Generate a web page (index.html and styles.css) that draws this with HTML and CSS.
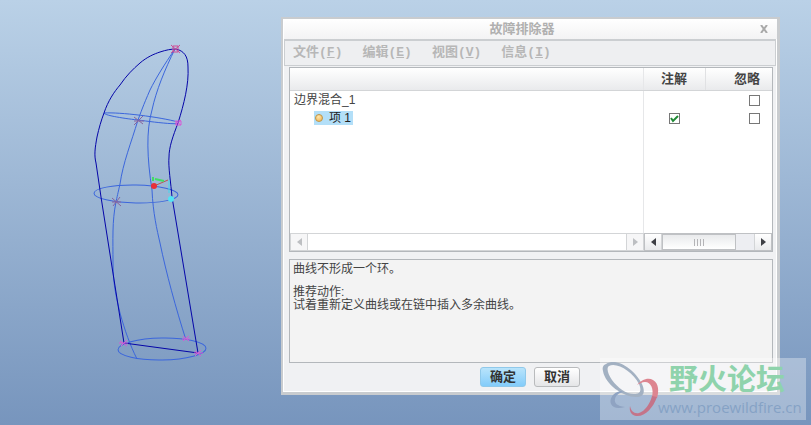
FILE: index.html
```
<!DOCTYPE html>
<html lang="zh-CN">
<head>
  <meta charset="UTF-8">
  <meta name="viewport" content="width=device-width, initial-scale=1.0">
  <title>故障排除器</title>
  <link rel="stylesheet" href="styles.css">
</head>
<body>

  <main class="workspace">

    <svg class="model" width="220" height="425" viewBox="0 0 220 425" fill="none">
      <!-- section curves -->
      <g stroke="#3b66dc">
        <path d="M175 49C164 65 156 78 150 90C143 106 141 112 138 120C131 143 123 163 120 184C118 193 117 197 116 202C112 221 113 240 113 263C113 286 117 300 120 313C125 331 130 345 137 359"/>
        <path d="M175 49C165 69 156 91 152 110C146 131 147 158 152 190C153 213 157 230 160 243C166 272 176 309 186 340"/>
        <path d="M104 113C120 112 160 117 178 122C184 126 153 122 138 120C120 118 104 115 104 113Z"/>
        <ellipse cx="136" cy="194" rx="42" ry="9" transform="rotate(1 136 194)"/>
        <ellipse cx="162" cy="349" rx="44" ry="11" transform="rotate(-1 162 349)"/>
      </g>
      <!-- boundary -->
      <path stroke="#0505a8" d="M124 343L101 197L96 163C94 155 95 148 97 137C99 128 101 121 104 113C108 101 114 92 120 85C126 76 133 69 140 63C147 57 154 54 160 52C166 50 171 49 176 49C184 51 188 56 188 67C189 84 184 104 178 123C173 136 169 147 169 157C168 166 171 184 172 197L198 353L124 343"/>
      <!-- vertices -->
      <g stroke="#d65ad6">
        <path stroke="#d04a94" d="M171 45L180 53M180 45L171 53M173 46H178V52H173Z"/>
        <path d="M175 121L181 125M181 120L175 125M176 121H181V125H176Z"/>
        <path d="M120 341L127 346M127 340L121 346M119 343H128"/>
        <path d="M183 336L189 341M189 336L183 341M182 339H190"/>
        <path d="M195 351L201 356M201 350L195 356M194 353H203"/>
      </g>
      <path stroke="#88649d" d="M134 117L143 124M143 116L134 125M134 121H144M112 198L121 206M120 197L113 206M112 202H121"/>
      <!-- coordinate system -->
      <path stroke="#43d8ef" d="M169 180V193"/>
      <path stroke="#b95555" d="M154 186L168 180"/>
      <path stroke="#42dc65" d="M153 177V181M155 179L164 181" stroke-width="2"/>
      <circle cx="154" cy="186" r="3" fill="#e82f37"/>
      <circle cx="171" cy="199" r="3" fill="#52e4f5"/>
    </svg>

    <section class="dialog" role="dialog" aria-labelledby="dialog-title">
      <header class="titlebar">
        <h1 id="dialog-title" class="title">故障排除器</h1>
        <button class="close" type="button" aria-label="关闭">
          <svg width="8" height="8" viewBox="0 0 8 8"><path d="M1 0L7 8M7 0L1 8" stroke="#a9a9a9" stroke-width="2"/></svg>
        </button>
      </header>

      <nav class="menubar">
        <button type="button" class="menu">文件(<u>F</u>)</button>
        <button type="button" class="menu">编辑(<u>E</u>)</button>
        <button type="button" class="menu">视图(<u>V</u>)</button>
        <button type="button" class="menu">信息(<u>I</u>)</button>
      </nav>

      <div class="content">
        <div class="list">
          <div class="list-body">
            <table class="tree">
              <thead>
                <tr>
                  <th class="col-name"></th>
                  <th class="col-note">注解</th>
                  <th class="col-ignore">忽略</th>
                </tr>
              </thead>
              <tbody>
                <tr>
                  <td class="col-name">边界混合_1</td>
                  <td class="col-note"></td>
                  <td class="col-ignore"><input type="checkbox" class="check" aria-label="忽略 边界混合_1"></td>
                </tr>
                <tr>
                  <td class="col-name child"><span class="selected"><i class="bullet"></i>项 1</span></td>
                  <td class="col-note"><input type="checkbox" class="check" checked aria-label="注解 项 1"></td>
                  <td class="col-ignore"><input type="checkbox" class="check" aria-label="忽略 项 1"></td>
                </tr>
                <tr class="filler">
                  <td class="col-name"></td>
                  <td class="col-note"></td>
                  <td class="col-ignore"></td>
                </tr>
              </tbody>
            </table>
          </div>
          <div class="scrollbars">
            <div class="scrollbar disabled">
              <button type="button" class="arrow" aria-label="向左"><svg width="5" height="8" viewBox="0 0 5 8"><path d="M5 0V8L0 4Z"/></svg></button>
              <div class="track"></div>
              <button type="button" class="arrow" aria-label="向右"><svg width="5" height="8" viewBox="0 0 5 8"><path d="M0 0V8L5 4Z"/></svg></button>
            </div>
            <div class="scrollbar columns">
              <button type="button" class="arrow" aria-label="向左"><svg width="5" height="8" viewBox="0 0 5 8"><path d="M5 0V8L0 4Z"/></svg></button>
              <div class="track">
                <div class="thumb"><svg width="12" height="7" viewBox="0 0 12 7"><path d="M1.500 0V7M4.500 0V7M7.500 0V7M10.500 0V7" stroke="#b4b4b7"/></svg></div>
              </div>
              <button type="button" class="arrow" aria-label="向右"><svg width="5" height="8" viewBox="0 0 5 8"><path d="M0 0V8L5 4Z"/></svg></button>
            </div>
          </div>
        </div>

        <div class="message">
          <p>曲线不形成一个环。</p>
          <p class="advice">推荐动作:</p>
          <p>试着重新定义曲线或在链中插入多余曲线。</p>
        </div>
      </div>

      <footer class="actions">
        <button type="button" class="btn primary">确定</button>
        <button type="button" class="btn">取消</button>
      </footer>
    </section>

    <aside class="watermark">
      <svg class="logo" width="60" height="56" viewBox="0 0 60 56">
        <path fill="#a3b1c2" fill-rule="evenodd" d="M5 3C16-4 34 9 41 23C45 32 42 36 35 36C22 36 4 23 2 10C1 7 2 4 5 3ZM8 5C5 7 7 13 11 19C17 27 25 33 33 33C39 33 41 30 38 23C32 11 16 1 8 5Z"/>
        <path fill="#8fa3c2" d="M20 30C12 31 8 38 10 43C12 47 17 48 24 46C16 45 13 42 14 38C15 34 18 32 22 31Z"/>
        <path fill="#dd8590" d="M36 24C40 19 47 16 52 19C58 22 58 31 56 37L51 36C53 28 50 21 44 21C41 21 38 23 36 24Z"/>
        <path fill="#c47489" d="M56 36C52 47 44 56 35 55C30 54 28 50 29 45C30 50 33 53 38 52C44 50 49 43 51 35Z"/>
      </svg>
      <div class="brand">
        <strong class="brand-name">野火论坛</strong>
        <span class="brand-url">www.proewildfire.cn</span>
      </div>
    </aside>

  </main>

</body>
</html>
```
FILE: styles.css
```
* {
  box-sizing: border-box;
}

body {
  margin: 0;
  font-family: "Liberation Sans", "Noto Sans CJK SC", sans-serif;
  font-size: 12px;
  color: #444;
}

button {
  margin: 0;
  padding: 0;
  border: 0;
  background: none;
  font: inherit;
  color: inherit;
}

p {
  margin: 0;
}

.workspace {
  position: relative;
  min-height: 100vh;
  overflow: hidden;
  background: linear-gradient(#bad1e7, #7795bd);
}

.model {
  display: block;
}

/* Dialog window */
.dialog {
  position: absolute;
  top: 17px;
  left: 281px;
  right: 31px;
  border: 2px solid #c9cccf;
  border-right-width: 3px;
  border-bottom-width: 3px;
  background: #f0f1f3;
  box-shadow: inset 0 0 0 1px #fff;
}

.titlebar {
  display: flex;
  align-items: center;
  height: 20px;
  padding: 0 9px 0 0;
  margin-left: 1px;
  background: linear-gradient(#fff, #f3f3f4);
}

.title {
  flex: 1;
  margin: 0;
  font-size: 13px;
  line-height: 20px;
  text-align: center;
  color: #b0b0b0;
}

.close {
  display: flex;
}

.menubar {
  display: flex;
  gap: 20px;
  height: 27px;
  margin: 0 1px;
  padding: 0 8px;
  border: solid #cbced1;
  border-width: 2px 1px 1px;
  background: #eeeff1;
}

.menu {
  font-family: "Liberation Mono", "Noto Sans CJK SC", monospace;
  font-size: 13px;
  font-weight: bold;
  line-height: 22px;
  color: #b7b7b7;
}

.content {
  display: flex;
  flex-direction: column;
  gap: 7px;
  padding: 1px 4px 0 6px;
}

/* Item list */
.list {
  border: 1px solid #b3b7bb;
  background: #fff;
}

.list-body {
  height: 165px;
}

.tree {
  width: 100%;
  height: 100%;
  table-layout: fixed;
  border-collapse: collapse;
}

.tree tr {
  height: 18px;
}

.tree thead tr {
  height: 22px;
  background: linear-gradient(#fff, #e9eaec);
}

.tree .filler {
  height: auto;
}

.tree th {
  padding: 0;
  border-bottom: 1px solid #d3d5d7;
  font-size: 13px;
  line-height: 20px;
}

.tree td {
  padding: 0;
  line-height: 18px;
}

.tree .col-name {
  padding-left: 4px;
  border-right: 1px solid #e6e7e9;
}

.tree .child {
  padding-left: 24px;
}

.tree .col-note {
  width: 62px;
  text-align: center;
}

.tree th.col-note {
  border-right: 1px solid #e0e1e3;
}

.tree .col-ignore {
  width: 67px;
  padding-right: 12px;
  text-align: right;
}

.selected {
  display: inline-flex;
  align-items: center;
  gap: 6px;
  height: 14px;
  padding: 0 2px 0 1px;
  background: #b3dff8;
  color: #222;
  vertical-align: middle;
}

.bullet {
  width: 8px;
  height: 8px;
  border: 1px solid #bd964b;
  border-radius: 50%;
  background: radial-gradient(circle at 40% 30%, #ffe7ab, #f0ae4c);
}

.check {
  display: inline-block;
  appearance: none;
  width: 11px;
  height: 11px;
  margin: 0;
  border: 1px solid #777;
  background: #fff;
  vertical-align: middle;
}

.check:checked {
  background: #fff url("data:image/svg+xml,%3Csvg xmlns='http://www.w3.org/2000/svg' viewBox='0 0 9 9'%3E%3Cpath d='M1 4L3 7L8 2' fill='none' stroke='%231f8a35' stroke-width='2'/%3E%3C/svg%3E");
}

/* Scrollbars */
.scrollbars {
  display: flex;
  height: 18px;
}

.scrollbar {
  display: flex;
  flex: 1;
  border: 1px solid #d3d5d7;
  background: #fff;
}

.columns {
  flex: 0 0 128px;
  border-color: #bfc1c4;
  background: #edeef2;
}

.arrow {
  display: flex;
  align-items: center;
  justify-content: center;
  width: 16px;
  background: linear-gradient(#fff, #e9eaec);
  fill: #3e3f45;
}

.disabled .arrow {
  background: #f6f6f7;
  fill: #bdbfc2;
}

.track {
  display: flex;
  flex: 1;
  border: solid #d3d5d7;
  border-width: 0 1px;
}

.thumb {
  display: flex;
  align-items: center;
  justify-content: center;
  width: 80%;
  border: 1px solid #bfc1c4;
  background: linear-gradient(#e9eaec, #fff);
}

/* Message area */
.message {
  height: 104px;
  padding: 3px;
  border: 1px solid #b3b7bb;
  background: #f3f3f3;
  line-height: 13px;
}

.advice {
  margin-top: 10px;
}

.actions {
  display: flex;
  justify-content: center;
  gap: 8px;
  padding: 4px 0 5px;
}

.btn {
  width: 46px;
  height: 20px;
  border: 1px solid #b9bbbd;
  border-radius: 3px;
  background: linear-gradient(#fff, #e4e5e7);
  font-size: 13px;
  font-weight: bold;
  line-height: 18px;
  color: #333;
}

.primary {
  border-color: #90c9ea;
  background: linear-gradient(#b9e4fb, #83ccfa);
}

/* Forum watermark */
.watermark {
  position: absolute;
  right: 5px;
  bottom: 5px;
  display: flex;
  width: 206px;
  height: 62px;
  padding: 3px 0 0 1px;
  background: rgba(255, 255, 255, 0.33);
}

.brand {
  display: flex;
  flex-direction: column;
  margin-left: -3px;
}

.brand-name {
  padding-left: 11px;
  font-size: 29px;
  line-height: 38px;
  color: #8fd3ac;
}

.brand-url {
  font-family: "Open Sans", sans-serif;
  font-size: 15px;
  line-height: 16px;
  color: #85a2c5;
}
```
